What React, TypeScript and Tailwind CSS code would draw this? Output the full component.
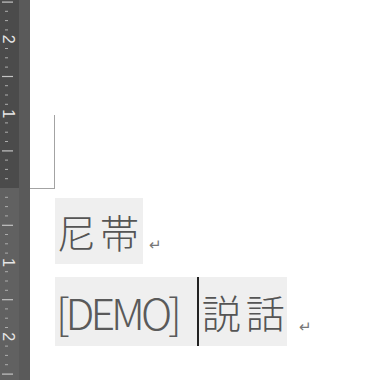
import React from 'react'

const MARGIN = 188
const STEP = 9.3

function Ruler() {
  const ticks = []
  for (let k = -21; k <= 21; k++) {
    const y = MARGIN + k * STEP
    if (y < -2 || y > 382 || k === 0) continue
    if (k % 8 === 0) {
      const n = Math.abs(k / 8)
      ticks.push(
        <text
          key={k}
          x={8}
          y={y}
          fill="#e6e6e6"
          fontSize="16"
          fontFamily="Liberation Sans, sans-serif"
          textAnchor="middle"
          dominantBaseline="central"
          transform={`rotate(90 8 ${y})`}
        >
          {n}
        </text>
      )
    } else if (k % 4 === 0) {
      ticks.push(<rect key={k} x={2} y={y - 0.5} width={11} height={1.2} fill="#c4c4c4" />)
    } else {
      ticks.push(<rect key={k} x={5} y={y - 0.5} width={3} height={1} fill="#adadad" />)
    }
  }
  return (
    <svg width="30" height="380" className="shrink-0 block">
      <rect x={0} y={0} width={19} height={MARGIN} fill="#4b4b4b" />
      <rect x={0} y={MARGIN} width={19} height={380 - MARGIN} fill="#616161" />
      <rect x={19} y={0} width={11} height={380} fill="#5a5a5a" />
      {ticks}
    </svg>
  )
}

export default function App() {
  return (
    <div className="flex w-[380px] h-[380px] overflow-hidden bg-white">
      <Ruler />
      <div className="flex-1 pt-[115px] font-['Noto_Sans_CJK_JP',sans-serif] text-[#555]">
        <div className="w-[25px] h-[74px] border-r border-b border-[#a3a3a3]" />
        <div className="mt-[9px] pl-[25px] flex items-end">
          <span className="bg-[#efefef] h-[66px] pl-[2px] text-[39px] leading-[66px] tracking-[4px] font-light">尼帯</span>
          <span className="ml-[6px] mb-[13px] text-[15px] leading-none text-[#777]">↵</span>
        </div>
        <div className="mt-[13px] pl-[25px] flex items-end">
          <span className="bg-[#efefef] h-[69px] flex items-center text-[43px] leading-[69px] font-light">
            <span className="tracking-[-4px] text-[#5a5a5a] pl-[1px]">[DEMO]</span>
            <span className="w-[19px]" />
            <span className="w-[2px] h-[69px] bg-[#222]" />
            <span className="text-[39px] tracking-[5px] pl-[3px] -mr-[3px]">説話</span>
          </span>
          <span className="ml-[12px] mb-[13px] text-[15px] leading-none text-[#777]">↵</span>
        </div>
      </div>
    </div>
  )
}
